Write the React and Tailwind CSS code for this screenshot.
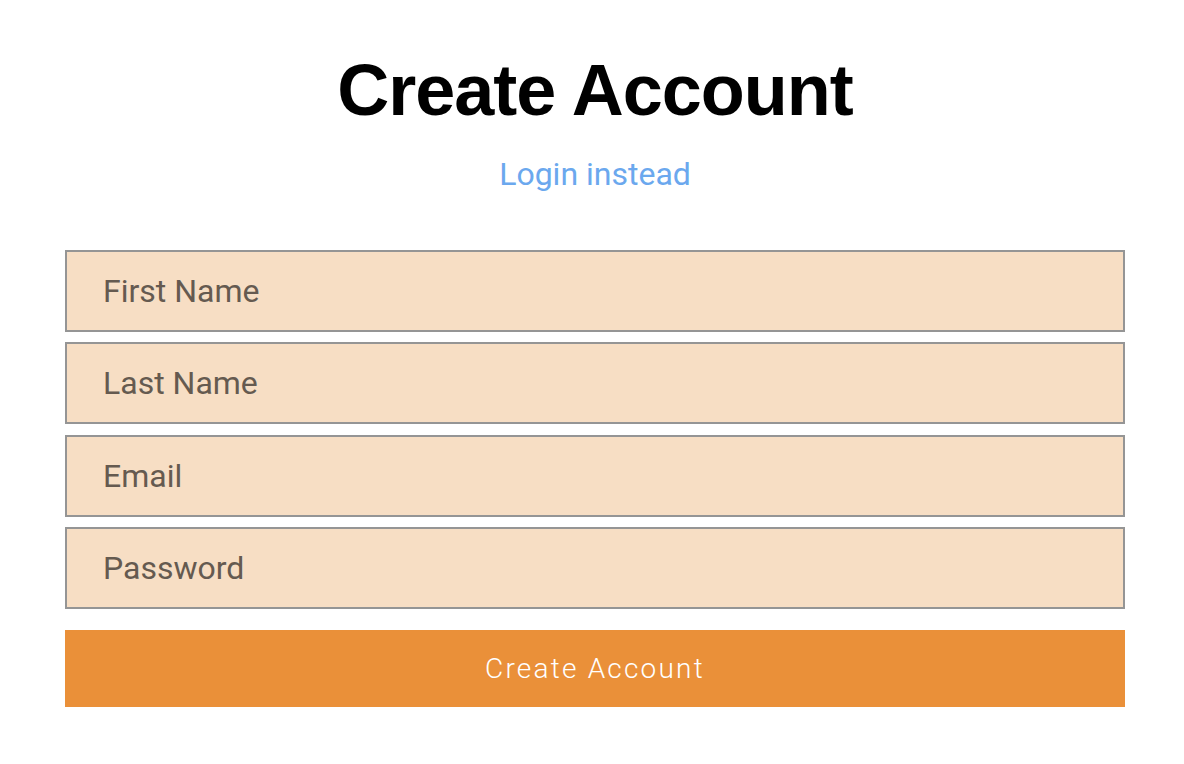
import React from 'react';

const fields = ['First Name', 'Last Name', 'Email', 'Password'];

const App = () => {
    return (
        <div className="min-h-[764px] bg-white">
            <div className="ml-[65px] w-[1060px] pt-[54px]">
                <h1 className="text-center text-[72px] leading-[72px] font-bold tracking-[-1px] text-black font-['Liberation_Sans',Arial,sans-serif]">
                    Create Account
                </h1>
                <div className="mt-[32px] text-center">
                    <a href="#" className="text-[32px] leading-[32px] text-[#6ba8ee] font-['Roboto',sans-serif]">
                        Login instead
                    </a>
                </div>

                <form className="mt-[59px] flex flex-col" onSubmit={(e) => e.preventDefault()}>
                    <div className="flex flex-col gap-[10.4px]">
                        {fields.map((f) => (
                            <input
                                key={f}
                                type={f === 'Password' ? 'password' : 'text'}
                                placeholder={f}
                                className="h-[82px] w-full border-2 border-[#959595] bg-[#f7dec4] pl-[36px] text-[32px] text-[#655a50] placeholder:text-[#655a50] outline-none font-['Roboto',sans-serif]"
                            />
                        ))}
                    </div>
                    <button
                        type="submit"
                        className="mt-[21px] h-[77px] w-full bg-[#ea9039] text-[28px] font-light tracking-[2.2px] text-white font-['Roboto',sans-serif]"
                    >
                        Create Account
                    </button>
                </form>
            </div>
        </div>
    );
};

export default App;
